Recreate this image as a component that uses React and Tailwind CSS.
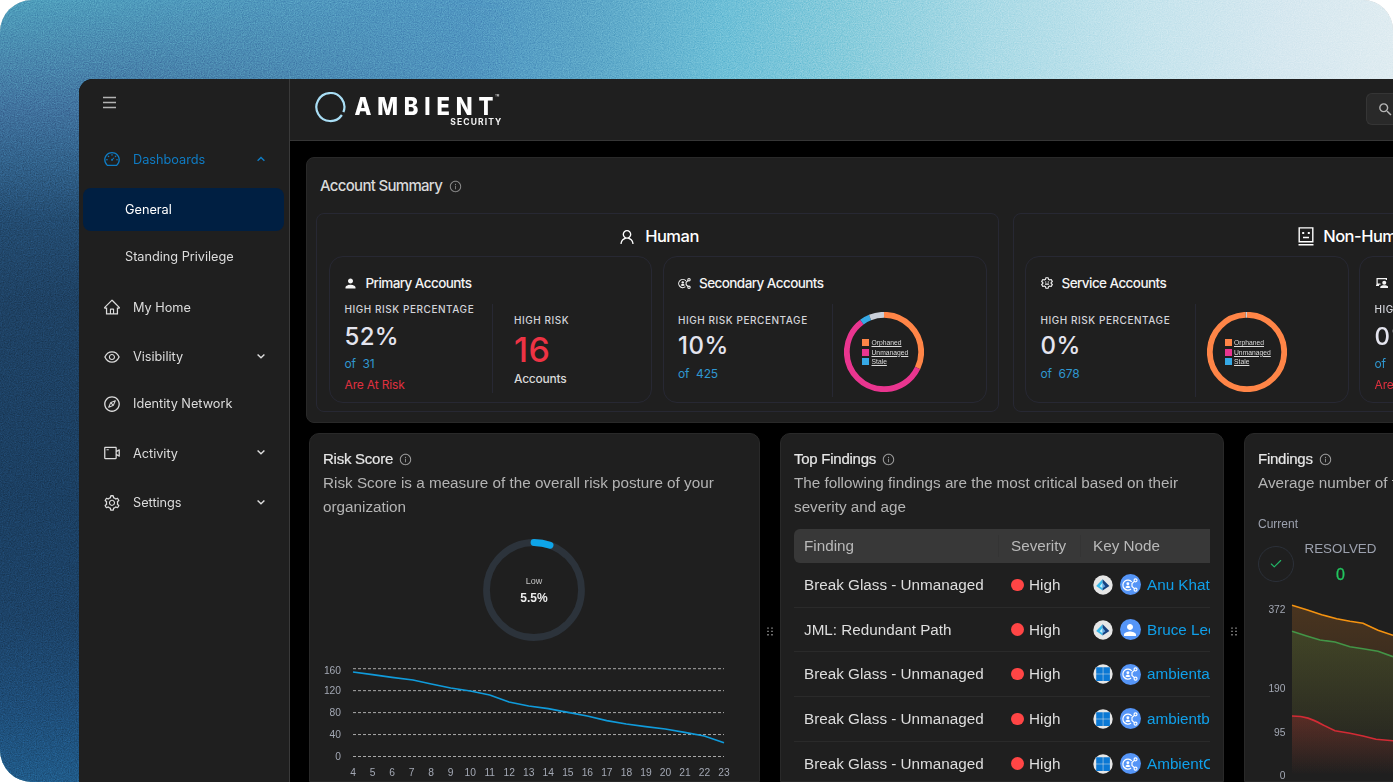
import {
  AiOutlineDashboard,
  AiOutlineHome,
  AiOutlineEye,
  AiOutlineCompass,
  AiOutlineVideoCamera,
  AiOutlineSetting,
  AiOutlineUser,
  AiOutlineInfoCircle,
} from 'react-icons/ai';
import { MdPerson, MdSearch } from 'react-icons/md';
import { FiCheck } from 'react-icons/fi';

const navItems = [
  { label: 'My Home', icon: AiOutlineHome, spacing: 'mt-[11px]' },
  { label: 'Visibility', icon: AiOutlineEye, spacing: 'mt-[9.5px]', expandable: true },
  { label: 'Identity Network', icon: AiOutlineCompass, spacing: 'mt-[7px]' },
  { label: 'Activity', icon: AiOutlineVideoCamera, spacing: 'mt-[9.5px]', expandable: true },
  { label: 'Settings', icon: AiOutlineSetting, spacing: 'mt-[9.5px]', expandable: true },
];

const legend = [
  { label: 'Orphaned', color: 'bg-[#ff8547]' },
  { label: 'Unmanaged', color: 'bg-[#e9358f]' },
  { label: 'Stale', color: 'bg-[#36a9e6]' },
];

const findings = [
  { name: 'Break Glass - Unmanaged', source: 'entra', node: 'shared', key: 'Anu Khatri' },
  { name: 'JML: Redundant Path', source: 'entra', node: 'person', key: 'Bruce Lee' },
  { name: 'Break Glass - Unmanaged', source: 'windows', node: 'shared', key: 'ambienta' },
  { name: 'Break Glass - Unmanaged', source: 'windows', node: 'shared', key: 'ambientb' },
  { name: 'Break Glass - Unmanaged', source: 'windows', node: 'shared', key: 'AmbientC' },
];

const riskPoints = [
  [0, 6.3], [19.5, 9], [39, 11.7], [60, 14.3], [78.3, 18.3], [97.7, 22.3], [117.3, 25.3],
  [136.7, 29.3], [156, 36.3], [175.7, 40.3], [195.3, 43], [215, 46.7], [234.3, 50.3],
  [253.7, 55], [273.3, 58.3], [292.7, 61], [312.3, 63.3], [331.7, 66.7], [351.3, 70.3], [371, 77],
];

const Chevron = ({ up }) => (
  <svg width="10" height="10" viewBox="0 0 10 10" fill="none" stroke="currentColor" strokeWidth="1.4">
    <path d={up ? 'M1.6 6.8 5 3.4 8.4 6.8' : 'M1.6 2.4 5 5.8 8.4 2.4'} />
  </svg>
);

const SharedAccountIcon = ({ size, stroke = 1.8 }) => (
  <svg width={size} height={size} viewBox="0 0 24 24" fill="none" stroke="currentColor" strokeWidth={stroke}>
    <path d="M13.6 17.9A7.500 7.500 0 1 1 14.600 7.300" />
    <circle cx="8.800" cy="10" r="2.200" fill="currentColor" stroke="none" />
    <path d="M5 15.400c.8-3.200 6.800-3.200 7.600 0-2 1.700-5.600 1.700-7.600 0z" fill="currentColor" stroke="none" />
    <path d="m18.600 6.500-3.600 3.300v4.400l3.600 3.300" />
    <circle cx="20.300" cy="5" r="2.200" />
    <circle cx="20.300" cy="19" r="2.200" />
  </svg>
);

const ServiceIcon = () => (
  <svg width="12" height="12" viewBox="0 0 24 24" fill="none" stroke="currentColor" strokeWidth="2.2" strokeLinejoin="round">
    <path d="m9.600 1.500-.5 3.100-2.500 1.500-3-1.100-2.300 4L3.700 11v2l-2.400 2 2.300 4 3-1.100 2.500 1.500.5 3.100h4.800l.5-3.100 2.500-1.500 3 1.100 2.300-4-2.400-2v-2l2.400-2-2.300-4-3 1.100-2.500-1.500-.5-3.100z" />
    <path d="M8 10h2.500M13.500 10H16M8 14.200h8" />
  </svg>
);

const WorkstationIcon = () => (
  <svg width="13" height="12" viewBox="0 0 26 24" fill="currentColor">
    <path d="M3 2h21v4h-2.400V4.400H5.400V13H11v2.400H8V18H2v-2.600h1z" />
    <circle cx="18.500" cy="11.500" r="4" />
    <path d="M10.500 22v-2c0-5 16-5 16 0v2z" />
  </svg>
);

const MachineIcon = () => (
  <svg width="16" height="19" viewBox="0 0 16 19" fill="none" stroke="currentColor" strokeWidth="1.4">
    <path d="M1.200.9h13.600v13.800H1.200zM.5 17.700h15M5 10.500h6" />
    <path d="M4.200 6h2M9.800 6h2" strokeWidth="1.8" />
  </svg>
);

const Logo = () => (
  <svg width="190" height="38" viewBox="0 0 190 38" fill="none">
    <path d="M26.900 23A14 14 0 1 1 28.400 20.200" stroke="#a9def5" strokeWidth="2.2" />
    <text
      transform="translate(39.4 23.4) scale(.88 1)"
      fontFamily="Inter, sans-serif"
      fontWeight="800"
      fontSize="25"
      fill="#fff"
      textLength="158"
    >
      AMBIENT
    </text>
    <text x="135.300" y="33" fontFamily="Inter, sans-serif" fontWeight="700" fontSize="8.5" fill="#f2f2f2" textLength="51">SECURITY</text>
    <text x="180" y="7.500" fontFamily="Inter, sans-serif" fontWeight="600" fontSize="7" fill="#d8d8d8">™</text>
  </svg>
);

const EntraIcon = () => (
  <svg width="20" height="20" viewBox="0 0 20 20">
    <circle cx="10" cy="10" r="9.7" fill="#e6e6e6" />
    <path d="M9.600 4.300 3.200 11l6.400 4.600z" fill="#35b8ea" />
    <path d="M9.600 4.300v11.300l6.800-4.600z" fill="#16417f" />
    <path d="m9.600 7.800-3 3.500 3 1.900z" fill="#c5f1fb" />
    <path d="m9.600 7.800 2.800 3.500-2.800 1.900z" fill="#5fa9e6" />
  </svg>
);

const WindowsIcon = () => (
  <svg width="20" height="20" viewBox="0 0 20 20">
    <circle cx="10" cy="10" r="9.7" fill="#e6e6e6" />
    <path d="M3.200 3.200h6.600v6.600H3.200zM10.300 3.200h6.600v6.600h-6.600zM3.200 10.300h6.600v6.600H3.200zM10.300 10.300h6.600v6.600h-6.600z" fill="#0a78d4" />
  </svg>
);

const DragHandle = () => (
  <div className="flex w-5 shrink-0 justify-center pt-[193.5px] text-[#8a8a8a]">
    <svg width="7" height="9" viewBox="0 0 7 9" fill="currentColor">
      {[0.4, 3.7, 7].map((y) => (
        <path key={y} d={`M.2 ${y}h1.600v1.400H.2zM4.200 ${y}h1.600v1.400H4.200z`} />
      ))}
    </svg>
  </div>
);

const Donut = ({ segments }) => (
  <div className="relative h-20 w-20">
    <svg width="80" height="80" viewBox="0 0 80 80" fill="none" className="-rotate-90">
      {segments.map((s) => (
        <circle
          key={s.color}
          cx="40"
          cy="40"
          r="37.2"
          stroke={s.color}
          strokeWidth="5.8"
          pathLength="360"
          strokeDasharray={`${s.to - s.from} 360`}
          strokeDashoffset={-s.from}
        />
      ))}
    </svg>
    <ul className="absolute top-[26px] left-[18px] font-['Liberation_Sans',sans-serif] text-[6.75px] leading-[9.6px] text-[#dcdcdc]">
      {legend.map((item) => (
        <li key={item.label} className="flex items-center gap-[2.5px]">
          <span className={`h-[7px] w-[7px] ${item.color}`} />
          <span className="underline underline-offset-1">{item.label}</span>
        </li>
      ))}
    </ul>
  </div>
);

const CardTitle = ({ icon, children }) => (
  <div className="flex h-5 items-center text-[#f4f4f4]">
    <span className="flex w-[21px] items-center">{icon}</span>
    <h4 className="text-[13.5px] font-medium tracking-[-0.57px] whitespace-nowrap">{children}</h4>
  </div>
);

const RiskLabel = ({ children }) => (
  <p className="text-[10px] leading-3 font-medium tracking-[0.55px] whitespace-nowrap text-[#d3d4da]">{children}</p>
);

// Card with a percentage on the left and the at-risk count on the right
const CountCard = ({ icon, title, percent, total, count }) => (
  <div className="h-[147px] w-[323px] shrink-0 rounded-[14px] border border-[#272833] pt-4 pl-[14.5px]">
    <CardTitle icon={icon}>{title}</CardTitle>
    <div className="mt-[11px] flex h-[89px]">
      <div className="w-[148px] border-r border-[#272833]">
        <div className="-mt-px"><RiskLabel>HIGH RISK PERCENTAGE</RiskLabel></div>
        <p className="mt-[6.5px] text-2xl leading-[30px] font-medium tracking-[0.3px] text-[#e4e4ee]">{percent}</p>
        <p className="mt-[4.5px] text-xs leading-4 tracking-[-0.1px] whitespace-pre text-[#2f97d0]">{`of  ${total}`}</p>
        <p className="mt-[5px] text-xs leading-4 tracking-[-0.15px] text-[#e0303f]">Are At Risk</p>
      </div>
      <div className="pt-[10px] pl-[21.5px]">
        <RiskLabel>HIGH RISK</RiskLabel>
        <p className="mt-[5px] text-[34px] leading-[38px] font-medium tracking-[0.5px] text-[#ee3344]">{count}</p>
        <p className="mt-[2px] text-xs leading-4 font-medium tracking-[-0.25px] text-[#d8d8d8]">Accounts</p>
      </div>
    </div>
  </div>
);

// Card with a percentage on the left and the account breakdown on the right
const BreakdownCard = ({ icon, title, percent, total, segments }) => (
  <div className="h-[147px] w-[324px] shrink-0 rounded-[14px] border border-[#272833] pt-4 pl-[14.5px]">
    <CardTitle icon={icon}>{title}</CardTitle>
    <div className="mt-[11px] flex h-[93px]">
      <div className="w-[155px] border-r border-[#272833] pt-[10px]">
        <RiskLabel>HIGH RISK PERCENTAGE</RiskLabel>
        <p className="mt-[4.5px] text-2xl leading-[30px] font-medium tracking-[0.5px] text-[#e4e4ee]">{percent}</p>
        <p className="mt-[5px] text-xs leading-4 tracking-[-0.1px] whitespace-pre text-[#2f97d0]">{`of  ${total}`}</p>
      </div>
      <div className="pt-2 pl-[11px]">
        <Donut segments={segments} />
      </div>
    </div>
  </div>
);

const PanelTitle = ({ children }) => (
  <h3 className="flex h-6 items-center gap-[6px] text-[15px] tracking-[-0.25px] text-[#e6e6e6] [-webkit-text-stroke:0.2px_#e6e6e6]">
    {children}
    <AiOutlineInfoCircle size={13} className="text-[#a3a3a3]" strokeWidth={0} />
  </h3>
);

const Sidebar = () => (
  <aside className="flex w-[211px] shrink-0 flex-col border-r border-[#3a3a3a] bg-[#1f1f1f] text-[12.75px] tracking-[-0.03px] text-[#dcdcdc]">
    <div className="flex h-[60px] items-start pt-[17px] pl-6">
      <svg width="13" height="13" viewBox="0 0 13 13" stroke="#b3b3b3" strokeWidth="1.4">
        <path d="M0 1.500h13M0 6.500h13M0 11.500h13" />
      </svg>
    </div>
    <div className="flex h-10 items-center pr-[23px] pl-6 text-[#0f7cc4]">
      <AiOutlineDashboard size={18} />
      <span className="ml-3 flex-1 pt-px">Dashboards</span>
      <Chevron up />
    </div>
    <div className="mt-[9px] mr-[5px] ml-1 flex h-[43px] items-center rounded-lg bg-[#001f42] pl-[42px] text-white">General</div>
    <div className="mt-[5px] flex h-10 items-center pt-0.5 pl-[46px]">Standing Privilege</div>
    {navItems.map((item) => (
      <div key={item.label} className={`flex h-10 shrink-0 items-center pr-[23px] pl-6 ${item.spacing}`}>
        <item.icon size={18} />
        <span className="ml-3 flex-1 pt-px">{item.label}</span>
        {item.expandable && <Chevron />}
      </div>
    ))}
  </aside>
);

const AccountSummary = () => (
  <section className="ml-4 h-[266px] w-[1420px] shrink-0 rounded-lg border border-[#292929] bg-[#1f1f1f] pl-[9px]">
    <h2 className="flex h-[55px] items-center gap-[7px] pt-[2px] pl-1 text-[15px] font-medium tracking-[-0.7px] text-[#d9d9d9]">
      Account Summary
      <AiOutlineInfoCircle size={13} className="text-[#8f8f8f]" />
    </h2>
    <div className="flex gap-[14px]">
      <div className="h-[199px] w-[683px] shrink-0 rounded-lg border border-[#272833]">
        <h3 className="flex h-[42px] items-center justify-center gap-[9px] pt-[3px] pl-0.5 text-[16.5px] font-medium tracking-[-0.5px] text-white">
          <AiOutlineUser size={18} />
          Human
        </h3>
        <div className="flex gap-[10.5px] pl-3">
          <CountCard icon={<MdPerson size={15} className="-ml-0.5" />} title="Primary Accounts" percent="52%" total="31" count="16" />
          <BreakdownCard
            icon={<SharedAccountIcon size={13} stroke={2} />}
            title="Secondary Accounts"
            percent="10%"
            total="425"
            segments={[
              { color: '#ff8547', from: 0, to: 115.5 },
              { color: '#e9358f', from: 115.5, to: 323.5 },
              { color: '#36a9e6', from: 323.5, to: 338 },
              { color: '#c9ced8', from: 338, to: 360 },
            ]}
          />
        </div>
      </div>
      <div className="h-[199px] w-[683px] shrink-0 rounded-lg border border-[#272833]">
        <h3 className="flex h-[42px] items-center justify-center gap-[9px] pt-[3px] pl-1 text-[16.5px] font-medium tracking-[-0.5px] text-white">
          <MachineIcon />
          Non-Human
        </h3>
        <div className="flex gap-[10px] pl-[11px]">
          <BreakdownCard
            icon={<ServiceIcon />}
            title="Service Accounts"
            percent="0%"
            total="678"
            segments={[
              { color: '#ff8547', from: 0, to: 358 },
              { color: '#c9ced8', from: 358, to: 360 },
            ]}
          />
          <CountCard icon={<WorkstationIcon />} title="Workstations" percent="0%" total="12" count="0" />
        </div>
      </div>
    </div>
  </section>
);

const RiskScore = () => (
  <section className="w-[451px] shrink-0 rounded-t-[10px] border border-[#292929] bg-[#1f1f1f] pt-[13px] pl-[13px]">
    <PanelTitle>Risk Score</PanelTitle>
    <p className="w-[410px] text-[15.25px] leading-6 text-[#b4b4b4]">
      Risk Score is a measure of the overall risk posture of your organization
    </p>
    <div className="relative mt-5 ml-[160px] h-[102px] w-[102px]">
      <svg width="102" height="102" viewBox="0 0 102 102" fill="none" strokeWidth="6.8" className="-rotate-90">
        <circle cx="51" cy="51" r="47.5" stroke="#2c333b" />
        <circle cx="51" cy="51" r="47.5" stroke="#0ea5e9" strokeLinecap="round" pathLength="360" strokeDasharray="19.8 360" />
      </svg>
      <div className="absolute inset-0 text-center">
        <p className="pt-[37px] text-[9px] leading-[10px] text-[#c4c4c4]">Low</p>
        <p className="mt-1 text-xs leading-4 font-bold text-[#ececec]">5.5%</p>
      </div>
    </div>
    <svg width="416" height="124" viewBox="0 0 416 124" className="mt-[15px] block text-[10.25px]" fill="#a3a8b4">
      {[160, 120, 80, 40, 0].map((value, i) => (
        <g key={value}>
          <path d={`M30 ${12.7 + i * 21.95}H401`} stroke="#a8a8a8" strokeWidth="1" strokeDasharray="3 2" />
          <text x="18" y={(i ? 16.5 : 18) + i * 21.95} textAnchor="end">{value}</text>
        </g>
      ))}
      {riskPoints.map((p, i) => (
        <text key={i} x={30 + i * 19.53} y="119.7" textAnchor="middle">{i + 4}</text>
      ))}
      <polyline
        points={riskPoints.map(([x, y]) => `${30 + x},${y + 9.7}`).join(' ')}
        fill="none"
        stroke="#109bdb"
        strokeWidth="1.7"
      />
    </svg>
  </section>
);

const TopFindings = () => (
  <section className="w-[444px] shrink-0 rounded-t-[10px] border border-[#292929] bg-[#1f1f1f] pt-[13px] pr-[13.5px] pl-[13px]">
    <PanelTitle>Top Findings</PanelTitle>
    <p className="text-[15.25px] leading-6 whitespace-pre-line text-[#b4b4b4]">
      {'The following findings are the most critical based on their\nseverity and age'}
    </p>
    <div className="mt-[10px] overflow-hidden text-[15.25px] whitespace-nowrap">
      <div className="flex h-[34px] items-center rounded-l-md bg-[#383838] text-[#b9b9b9]">
        <span className="w-[204px] pl-[10px]">Finding</span>
        <span className="w-[82px] border-l border-[#343434] pl-3">Severity</span>
        <span className="border-l border-[#343434] pl-3">Key Node</span>
      </div>
      {findings.map((f, i) => (
        <div key={i} className="flex h-[44.7px] items-center border-b border-[#2a2a2a] text-[#dedede]">
          <span className="w-[204px] shrink-0 pt-px pl-[10px]">{f.name}</span>
          <span className="flex w-[82px] shrink-0 items-center gap-[5.5px] pl-[13px]">
            <span className="h-[12.5px] w-[12.5px] rounded-full bg-[#ff4545]" />
            <span className="pt-px">High</span>
          </span>
          <span className="flex shrink-0 items-center pl-[13px]">
            {f.source === 'entra' ? <EntraIcon /> : <WindowsIcon />}
            <span className="mr-[6.5px] ml-[6.5px] flex h-[21px] w-[21px] items-center justify-center rounded-full bg-[#5595f7] text-white">
              {f.node === 'person' ? <MdPerson size={18} /> : <SharedAccountIcon size={16} />}
            </span>
            <span className="pt-px text-[#10a0ea]">{f.key}</span>
          </span>
        </div>
      ))}
    </div>
  </section>
);

const Findings = () => (
  <section className="w-[460px] shrink-0 rounded-tl-[10px] border border-[#292929] bg-[#1f1f1f] pt-[13px] pl-[13px]">
    <PanelTitle>Findings</PanelTitle>
    <p className="text-[15.25px] leading-6 text-[#b4b4b4]">Average number of findings</p>
    <p className="mt-[21px] text-xs leading-4 text-[#9ca1ae]">Current</p>
    <div className="mt-2 flex gap-[10.5px]">
      <div className="mt-[6px] flex h-9 w-9 items-center justify-center rounded-full border border-[#2b3039] text-[#22b566]">
        <FiCheck size={14} />
      </div>
      <div className="text-center">
        <p className="text-[13.4px] leading-[17px] text-[#9ca1ae]">RESOLVED</p>
        <p className="mt-[9px] text-base leading-[17px] text-[#22c55e] [-webkit-text-stroke:0.3px_#22c55e]">0</p>
      </div>
    </div>
    <svg width="200" height="190" viewBox="0 0 200 190" className="mt-[12px] block text-[10.25px]" fill="#a3a8b4">
      <defs>
        <linearGradient id="open" x1="0" y1="10" x2="0" y2="180" gradientUnits="userSpaceOnUse">
          <stop offset="0" stopColor="#f58a20" stopOpacity="0.2" />
          <stop offset="1" stopColor="#f58a20" stopOpacity="0" />
        </linearGradient>
        <linearGradient id="closed" x1="0" y1="30" x2="0" y2="180" gradientUnits="userSpaceOnUse">
          <stop offset="0" stopColor="#35a04a" stopOpacity="0.18" />
          <stop offset="1" stopColor="#35a04a" stopOpacity="0" />
        </linearGradient>
        <linearGradient id="high" x1="0" y1="120" x2="0" y2="180" gradientUnits="userSpaceOnUse">
          <stop offset="0" stopColor="#dc2630" stopOpacity="0.25" />
          <stop offset="1" stopColor="#dc2630" stopOpacity="0" />
        </linearGradient>
      </defs>
      <g fill="none" strokeWidth="1.6" transform="translate(34 0)">
        <path d="M0 10.300 14.700 14.700 29.700 19.700 44.700 23.700 58 26.300 71 28.300 86 35.300 101 40.300V180H0z" fill="url(#open)" />
        <path d="M0 36.300 14.700 41 28 45 43 47 58 51.700 71 53.700 86 56.300 101 61.700V180H0z" fill="url(#closed)" />
        <path d="M0 121C18 121 22 126 43 135.700L58 138.300 71 141 84 144.300 101 145.700V180H0z" fill="url(#high)" />
        <path d="M0 10.300 14.700 14.700 29.700 19.700 44.700 23.700 58 26.300 71 28.300 86 35.300 101 40.300" stroke="#f59310" />
        <path d="M0 36.300 14.700 41 28 45 43 47 58 51.700 71 53.700 86 56.300 101 61.700" stroke="#439547" />
        <path d="M0 121C18 121 22 126 43 135.700L58 138.300 71 141 84 144.300 101 145.700" stroke="#d32b35" />
      </g>
      <g textAnchor="end">
        <text x="27.5" y="18">372</text>
        <text x="27.5" y="96.5">190</text>
        <text x="27.5" y="140.5">95</text>
        <text x="27.5" y="184.4">0</text>
      </g>
    </svg>
  </section>
);

const Backdrop = () => (
  <>
    <div className="absolute inset-0 bg-[linear-gradient(to_right,#4f9fbc_0%,#5098bd_18%,#5197c2_34%,#5ba5c7_42%,#6dbfd7_52%,#87ccdc_61%,#a9dae6_71%,#c5e4ed_82%,#d6e8f0_92%,#dfecf1_100%)]" />
    <div className="absolute inset-0 bg-[linear-gradient(to_bottom,#4577a300_0px,#4577a3b0_70px,#40719d_110px,#32628b_160px,#234b70_220px,#1e4163_300px,#1b3f62_500px,#1c4267_620px,#1e4d78_710px,#205a88_782px)] [mask-image:linear-gradient(to_right,black_0px,black_140px,transparent_520px)]" />
    <svg className="absolute inset-0 h-full w-full opacity-40 mix-blend-overlay">
      <filter id="grain" colorInterpolationFilters="sRGB">
        <feTurbulence type="fractalNoise" baseFrequency="0.85" numOctaves="2" stitchTiles="stitch" />
        <feColorMatrix type="saturate" values="0" />
        <feComponentTransfer>
          <feFuncA type="linear" slope="0" intercept="1" />
        </feComponentTransfer>
      </filter>
      <rect width="100%" height="100%" filter="url(#grain)" />
    </svg>
  </>
);

const App = () => {
  return (
    <div className="relative h-[782px] w-[1393px] overflow-hidden rounded-l-[32px] rounded-tr-[30px] pt-[79px] pl-[79px] font-['Inter',sans-serif]">
      <Backdrop />
      <div className="relative flex h-[703px] overflow-hidden rounded-tl-[14px] bg-black">
        <Sidebar />
        <main className="flex min-w-0 flex-1 flex-col overflow-hidden">
          <header className="flex h-[62px] shrink-0 items-start justify-between border-b border-[#363636] bg-[#1f1f1f] pt-[13px] pl-[25px]">
            <Logo />
            <div className="mt-px flex h-8 w-[27px] items-center rounded-l-md border-y border-l border-[#353535] bg-[#292929] pl-[10px] text-[#b5b5b5]">
              <MdSearch size={17} className="shrink-0" />
            </div>
          </header>
          <div className="flex flex-1 flex-col overflow-hidden pt-[16px]">
            <AccountSummary />
            <div className="mt-[10px] ml-[19px] flex flex-1 overflow-hidden font-['Liberation_Sans',sans-serif]">
              <RiskScore />
              <DragHandle />
              <TopFindings />
              <DragHandle />
              <Findings />
            </div>
          </div>
        </main>
      </div>
    </div>
  );
};

export default App;
